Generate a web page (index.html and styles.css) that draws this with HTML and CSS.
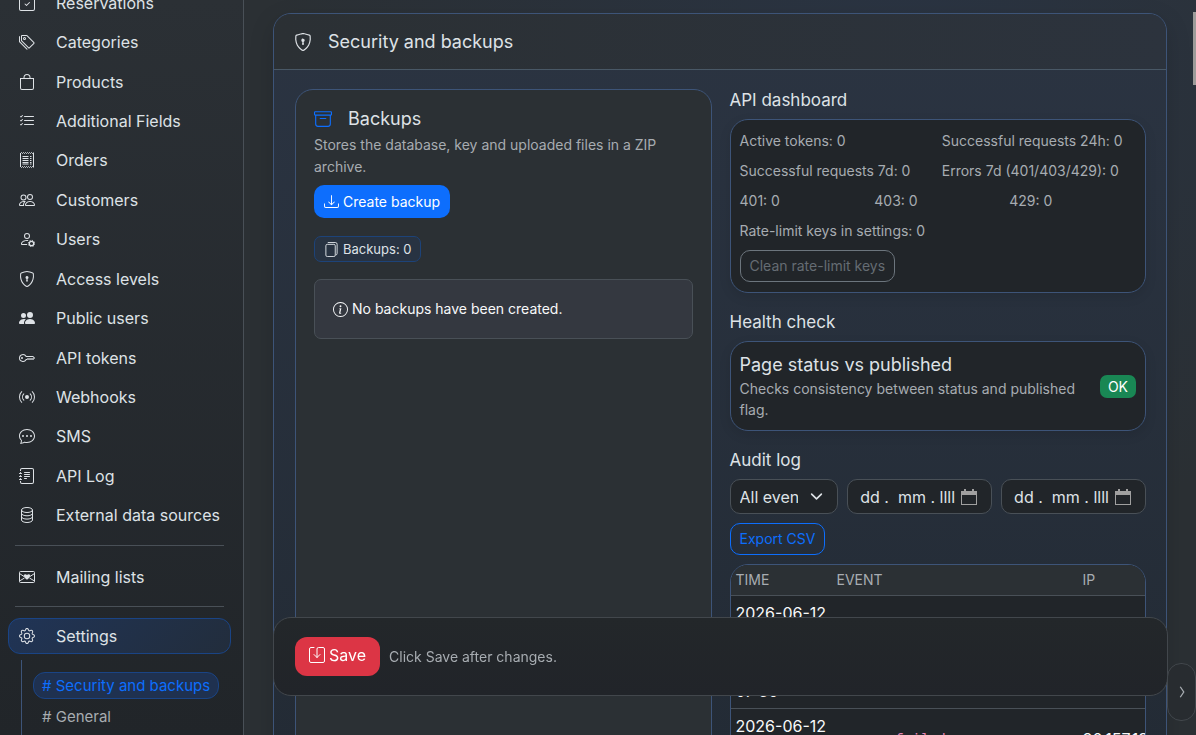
FILE: index.html
```html
<!DOCTYPE html>
<html lang="en">
<head>
  <meta charset="UTF-8">
  <meta name="viewport" content="width=device-width, initial-scale=1.0">
  <title>Security and backups</title>
  <link rel="stylesheet" href="styles.css">
</head>
<body>
  <svg class="sprite" aria-hidden="true">
    <symbol id="shield" viewBox="0 0 16 16">
      <path d="M5.338 1.59a61 61 0 0 0-2.837.856.48.48 0 0 0-.328.39c-.554 4.157.726 7.19 2.253 9.188a10.7 10.7 0 0 0 2.287 2.233c.346.244.652.42.893.533q.18.085.293.118a1 1 0 0 0 .101.025 1 1 0 0 0 .1-.025q.114-.034.294-.118c.24-.113.547-.29.893-.533a10.7 10.7 0 0 0 2.287-2.233c1.527-1.997 2.807-5.031 2.253-9.188a.48.48 0 0 0-.328-.39c-.651-.213-1.75-.56-2.837-.855C9.552 1.29 8.531 1.067 8 1.067c-.53 0-1.552.223-2.662.524zM5.072.56C6.157.265 7.31 0 8 0s1.843.265 2.928.56c1.11.3 2.229.655 2.887.87a1.54 1.54 0 0 1 1.044 1.262c.596 4.477-.787 7.795-2.465 9.99a11.8 11.8 0 0 1-2.517 2.453 7 7 0 0 1-1.048.625c-.28.132-.581.24-.829.24s-.548-.108-.829-.24a7 7 0 0 1-1.048-.625 11.8 11.8 0 0 1-2.517-2.453C1.928 10.487.545 7.169 1.141 2.692A1.54 1.54 0 0 1 2.185 1.43 63 63 0 0 1 5.072.56"/>
      <path d="M9.5 6.5a1.5 1.5 0 0 1-1 1.415l.385 1.99a.5.5 0 0 1-.491.595h-.788a.5.5 0 0 1-.49-.595l.384-1.99a1.5 1.5 0 1 1 2-1.415"/>
    </symbol>
    <symbol id="people" viewBox="0 0 16 16">
      <path d="M15 14s1 0 1-1-1-4-5-4-5 3-5 4 1 1 1 1zm-7.978-1L7 12.996c.001-.264.167-1.03.76-1.72C8.312 10.629 9.282 10 11 10c1.717 0 2.687.63 3.24 1.276.593.69.758 1.457.76 1.72l-.008.002-.014.002zM11 7a2 2 0 1 0 0-4 2 2 0 0 0 0 4m3-2a3 3 0 1 1-6 0 3 3 0 0 1 6 0M6.936 9.28a6 6 0 0 0-1.23-.247A7 7 0 0 0 5 9c-4 0-5 3-5 4q0 1 1 1h4.216A2.24 2.24 0 0 1 5 13c0-1.01.377-2.042 1.09-2.904.243-.294.526-.569.846-.816M4.92 10A5.5 5.5 0 0 0 4 13H1c0-.26.164-1.03.76-1.724.545-.636 1.492-1.256 3.16-1.275ZM1.5 5.5a3 3 0 1 1 6 0 3 3 0 0 1-6 0m3-2a2 2 0 1 0 0 4 2 2 0 0 0 0-4"/>
    </symbol>
  </svg>

  <div class="layout">
    <aside class="sidebar">
      <nav class="nav">
        <div class="nav-group">
          <a href="#" class="nav-item">
            <svg class="icon" viewBox="0 0 16 16"><path d="M10.854 7.146a.5.5 0 0 1 0 .708l-3 3a.5.5 0 0 1-.708 0l-1.5-1.5a.5.5 0 1 1 .708-.708L7.5 9.793l2.646-2.647a.5.5 0 0 1 .708 0"/><path d="M3.5 0a.5.5 0 0 1 .5.5V1h8V.5a.5.5 0 0 1 1 0V1h1a2 2 0 0 1 2 2v11a2 2 0 0 1-2 2H2a2 2 0 0 1-2-2V3a2 2 0 0 1 2-2h1V.5a.5.5 0 0 1 .5-.5M1 4v10a1 1 0 0 0 1 1h12a1 1 0 0 0 1-1V4z"/></svg>
            Reservations
          </a>
          <a href="#" class="nav-item">
            <svg class="icon" viewBox="0 0 16 16"><path d="M3 2v4.586l7 7L14.586 9l-7-7zM2 2a1 1 0 0 1 1-1h4.586a1 1 0 0 1 .707.293l7 7a1 1 0 0 1 0 1.414l-4.586 4.586a1 1 0 0 1-1.414 0l-7-7A1 1 0 0 1 2 6.586z"/><path d="M5.5 5a.5.5 0 1 1 0-1 .5.5 0 0 1 0 1m0 1a1.5 1.5 0 1 0 0-3 1.5 1.5 0 0 0 0 3M1 7.086a1 1 0 0 0 .293.707L8.75 15.25l-.043.043a1 1 0 0 1-1.414 0l-7-7A1 1 0 0 1 0 7.586V3a1 1 0 0 1 1-1z"/></svg>
            Categories
          </a>
          <a href="#" class="nav-item">
            <svg class="icon" viewBox="0 0 16 16"><path d="M8 1a2.500 2.500 0 0 1 2.500 2.500V4h-5v-.5A2.500 2.500 0 0 1 8 1m3.500 3v-.5a3.500 3.500 0 1 0-7 0V4H1v10a2 2 0 0 0 2 2h10a2 2 0 0 0 2-2V4zM2 5h12v9a1 1 0 0 1-1 1H3a1 1 0 0 1-1-1z"/></svg>
            Products
          </a>
          <a href="#" class="nav-item">
            <svg class="icon" viewBox="0 0 16 16"><path d="M5 11.500a.5.5 0 0 1 .5-.5h9a.5.5 0 0 1 0 1h-9a.5.5 0 0 1-.5-.5m0-4a.5.5 0 0 1 .5-.5h9a.5.5 0 0 1 0 1h-9a.5.5 0 0 1-.5-.5m0-4a.5.5 0 0 1 .5-.5h9a.5.5 0 0 1 0 1h-9a.5.5 0 0 1-.5-.5M3.854 2.146a.5.5 0 0 1 0 .708l-1.500 1.500a.5.5 0 0 1-.708 0l-.5-.5a.5.5 0 1 1 .708-.708L2 3.293l1.146-1.147a.5.5 0 0 1 .708 0m0 4a.5.5 0 0 1 0 .708l-1.500 1.500a.5.5 0 0 1-.708 0l-.5-.5a.5.5 0 1 1 .708-.708L2 7.293l1.146-1.147a.5.5 0 0 1 .708 0m0 4a.5.5 0 0 1 0 .708l-1.500 1.500a.5.5 0 0 1-.708 0l-.5-.5a.5.5 0 0 1 .708-.708l.146.147 1.146-1.147a.5.5 0 0 1 .708 0"/></svg>
            Additional Fields
          </a>
          <a href="#" class="nav-item">
            <svg class="icon" viewBox="0 0 16 16"><path d="M1.500 1v14M14.500 1v14M1.500 1.500l1-1 1 1 1-1 1 1 1-1 1 1 1-1 1 1 1-1 1 1 1-1 1 1 1-1M1.500 14.500l1 1 1-1 1 1 1-1 1 1 1-1 1 1 1-1 1 1 1-1 1 1 1-1 1 1M3.500 4.500h6M3.500 6.500h6M3.500 8.500h6M3.500 10.500h6M3.500 12h6M11 4.500h1.500M11 6.500h1.500M11 8.500h1.500M11 10.500h1.500M11 12h1.500" fill="none" stroke="currentColor"/></svg>
            Orders
          </a>
          <a href="#" class="nav-item"><svg class="icon"><use href="#people"/></svg>Customers</a>
          <a href="#" class="nav-item">
            <svg class="icon" viewBox="0 0 16 16"><path d="M11 5a3 3 0 1 1-6 0 3 3 0 0 1 6 0M8 7a2 2 0 1 0 0-4 2 2 0 0 0 0 4m.256 7a4.500 4.500 0 0 1-.229-1.004H3c.001-.246.154-.986.832-1.664C4.484 10.680 5.711 10 8 10q.390 0 .740.025c.226-.341.496-.650.804-.918Q8.844 9.002 8 9c-5 0-6 3-6 4s1 1 1 1z"/><circle cx="12.500" cy="12.500" r="2.200" fill="none" stroke="currentColor" stroke-width="1.300"/><circle cx="12.500" cy="12.500" r="3.200" fill="none" stroke="currentColor" stroke-dasharray="1.200 1.310"/></svg>
            Users
          </a>
          <a href="#" class="nav-item"><svg class="icon"><use href="#shield"/></svg>Access levels</a>
          <a href="#" class="nav-item">
            <svg class="icon" viewBox="0 0 16 16"><path d="M7 14s-1 0-1-1 1-4 5-4 5 3 5 4-1 1-1 1zm4-6a3 3 0 1 0 0-6 3 3 0 0 0 0 6m-5.784 6A2.240 2.240 0 0 1 5 13c0-1.355.680-2.750 1.936-3.720A6.300 6.300 0 0 0 5 9c-4 0-5 3-5 4s1 1 1 1zM4.500 8a2.500 2.500 0 1 0 0-5 2.500 2.500 0 0 0 0 5"/></svg>
            Public users
          </a>
          <a href="#" class="nav-item">
            <svg class="icon" viewBox="0 0 16 16"><path d="M0 8a4 4 0 0 1 7.465-2H14a.5.5 0 0 1 .354.146l1.500 1.500a.5.5 0 0 1 0 .708l-1.500 1.500a.5.5 0 0 1-.708 0L13 9.207l-.646.647a.5.5 0 0 1-.708 0L11 9.207l-.646.647a.5.5 0 0 1-.708 0L9 9.207l-.646.647A.5.5 0 0 1 8 10h-.535A4 4 0 0 1 0 8m4-3a3 3 0 1 0 2.712 4.285A.5.5 0 0 1 7.163 9h.630l.853-.854a.5.5 0 0 1 .708 0l.646.647.646-.647a.5.5 0 0 1 .708 0l.646.647.646-.647a.5.5 0 0 1 .708 0l.646.647.793-.793-1-1h-6.630a.5.5 0 0 1-.451-.285A3 3 0 0 0 4 5"/><path d="M4 8a1 1 0 1 1-2 0 1 1 0 0 1 2 0"/></svg>
            API tokens
          </a>
          <a href="#" class="nav-item">
            <svg class="icon" viewBox="0 0 16 16"><path d="M3.050 3.050a7 7 0 0 0 0 9.900.5.5 0 0 1-.707.707 8 8 0 0 1 0-11.314.5.5 0 0 1 .707.707m2.122 2.122a4 4 0 0 0 0 5.656.5.5 0 1 1-.708.708 5 5 0 0 1 0-7.072.5.5 0 0 1 .708.708m5.656-.708a.5.5 0 0 1 .708 0 5 5 0 0 1 0 7.072.5.5 0 1 1-.708-.708 4 4 0 0 0 0-5.656.5.5 0 0 1 0-.708m2.122-2.120a.5.5 0 0 1 .707 0 8 8 0 0 1 0 11.313.5.5 0 0 1-.707-.707 7 7 0 0 0 0-9.900.5.5 0 0 1 0-.707zM10 8a2 2 0 1 1-4 0 2 2 0 0 1 4 0"/></svg>
            Webhooks
          </a>
          <a href="#" class="nav-item">
            <svg class="icon" viewBox="0 0 16 16"><path d="M5 8a1 1 0 1 1-2 0 1 1 0 0 1 2 0m4 0a1 1 0 1 1-2 0 1 1 0 0 1 2 0m3 1a1 1 0 1 0 0-2 1 1 0 0 0 0 2"/><path d="m2.165 15.803.020-.004c1.830-.363 2.948-.842 3.468-1.105A9 9 0 0 0 8 15c4.418 0 8-3.134 8-7s-3.582-7-8-7-8 3.134-8 7c0 1.760.743 3.370 1.970 4.600a10.400 10.400 0 0 1-.524 2.318l-.003.011a11 11 0 0 1-.244.637c-.079.186.074.394.273.362a22 22 0 0 0 .693-.125m.800-3.108a1 1 0 0 0-.287-.801C1.618 10.830 1 9.468 1 8c0-3.192 3.004-6 7-6s7 2.808 7 6-3.004 6-7 6a8 8 0 0 1-2.088-.272 1 1 0 0 0-.711.074c-.387.196-1.240.570-2.634.893a11 11 0 0 0 .398-2"/></svg>
            SMS
          </a>
          <a href="#" class="nav-item">
            <svg class="icon" viewBox="0 0 16 16"><path d="M5 10.500a.5.5 0 0 1 .5-.5h2a.5.5 0 0 1 0 1h-2a.5.5 0 0 1-.5-.5m0-2a.5.5 0 0 1 .5-.5h5a.5.5 0 0 1 0 1h-5a.5.5 0 0 1-.5-.5m0-2a.5.5 0 0 1 .5-.5h5a.5.5 0 0 1 0 1h-5a.5.5 0 0 1-.5-.5m0-2a.5.5 0 0 1 .5-.5h5a.5.5 0 0 1 0 1h-5a.5.5 0 0 1-.5-.5"/><path d="M3 0h10a2 2 0 0 1 2 2v12a2 2 0 0 1-2 2H3a2 2 0 0 1-2-2v-1h1v1a1 1 0 0 0 1 1h10a1 1 0 0 0 1-1V2a1 1 0 0 0-1-1H3a1 1 0 0 0-1 1v1H1V2a2 2 0 0 1 2-2"/><path d="M1 5v-.5a.5.5 0 0 1 1 0V5h.5a.5.5 0 0 1 0 1h-2a.5.5 0 0 1 0-1zm0 3v-.5a.5.5 0 0 1 1 0V8h.5a.5.5 0 0 1 0 1h-2a.5.5 0 0 1 0-1zm0 3v-.5a.5.5 0 0 1 1 0v.5h.5a.5.5 0 0 1 0 1h-2a.5.5 0 0 1 0-1z"/></svg>
            API Log
          </a>
          <a href="#" class="nav-item">
            <svg class="icon" viewBox="0 0 16 16"><g fill="none" stroke="currentColor"><ellipse cx="8" cy="3" rx="5.500" ry="2.500"/><path d="M2.500 3v10c0 1.400 2.500 2.500 5.500 2.500s5.500-1.100 5.500-2.500V3M2.500 6.300c0 1.400 2.500 2.500 5.500 2.500s5.500-1.100 5.500-2.500M2.500 9.600c0 1.400 2.500 2.500 5.500 2.500s5.500-1.100 5.500-2.500"/></g></svg>
            External data sources
          </a>
        </div>
        <hr class="nav-divider">
        <a href="#" class="nav-item nav-single">
          <svg class="icon" viewBox="0 0 16 16"><path d="M1.500 2.500h13a1 1 0 0 1 1 1v9a1 1 0 0 1-1 1h-13a1 1 0 0 1-1-1v-9a1 1 0 0 1 1-1zM.5 4.500 5 7.500M15.500 4.500 11 7.500M.5 12l5-3M15.500 12l-5-3" fill="none" stroke="currentColor"/><path d="M8 6c1.500-1.500 4-.5 3 1.500C10.500 8.700 9.300 9.700 8 10.800 6.700 9.700 5.500 8.700 5 7.500 4 5.500 6.500 4.500 8 6"/></svg>
          Mailing lists
        </a>
        <hr class="nav-divider">
        <a href="#" class="nav-item nav-active">
          <svg class="icon" viewBox="0 0 16 16"><path d="M8 4.754a3.246 3.246 0 1 0 0 6.492 3.246 3.246 0 0 0 0-6.492M5.754 8a2.246 2.246 0 1 1 4.492 0 2.246 2.246 0 0 1-4.492 0"/><path d="M9.796 1.343c-.527-1.790-3.065-1.790-3.592 0l-.094.319a.873.873 0 0 1-1.255.520l-.292-.160c-1.640-.892-3.433.902-2.540 2.541l.159.292a.873.873 0 0 1-.520 1.255l-.319.094c-1.790.527-1.790 3.065 0 3.592l.319.094a.873.873 0 0 1 .520 1.255l-.160.292c-.892 1.640.901 3.434 2.541 2.540l.292-.159a.873.873 0 0 1 1.255.520l.094.319c.527 1.790 3.065 1.790 3.592 0l.094-.319a.873.873 0 0 1 1.255-.520l.292.160c1.640.893 3.434-.902 2.540-2.541l-.159-.292a.873.873 0 0 1 .520-1.255l.319-.094c1.790-.527 1.790-3.065 0-3.592l-.319-.094a.873.873 0 0 1-.520-1.255l.160-.292c.893-1.640-.902-3.433-2.541-2.540l-.292.159a.873.873 0 0 1-1.255-.520zm-2.633.283c.246-.835 1.428-.835 1.674 0l.094.319a1.873 1.873 0 0 0 2.693 1.115l.291-.160c.764-.415 1.600.420 1.184 1.185l-.159.292a1.873 1.873 0 0 0 1.116 2.692l.318.094c.835.246.835 1.428 0 1.674l-.319.094a1.873 1.873 0 0 0-1.115 2.693l.160.291c.415.764-.420 1.600-1.185 1.184l-.291-.159a1.873 1.873 0 0 0-2.693 1.116l-.094.318c-.246.835-1.428.835-1.674 0l-.094-.319a1.873 1.873 0 0 0-2.692-1.115l-.292.160c-.764.415-1.600-.420-1.184-1.185l.159-.291A1.873 1.873 0 0 0 1.945 8.930l-.319-.094c-.835-.246-.835-1.428 0-1.674l.319-.094A1.873 1.873 0 0 0 3.060 4.377l-.160-.292c-.415-.764.420-1.600 1.185-1.184l.292.159a1.873 1.873 0 0 0 2.692-1.115z"/></svg>
          Settings
        </a>
        <div class="subnav">
          <a href="#security" class="subnav-item subnav-active"># Security and backups</a>
          <a href="#general" class="subnav-item"># General</a>
        </div>
      </nav>
    </aside>

    <main class="content">
      <section class="card" id="security">
        <header class="card-header">
          <svg class="icon icon-lg"><use href="#shield"/></svg>
          <h1>Security and backups</h1>
        </header>
        <div class="card-body">
          <section class="backups">
            <div class="backups-title">
              <svg class="icon icon-lg" viewBox="0 0 16 16"><path d="M0 2a1 1 0 0 1 1-1h14a1 1 0 0 1 1 1v2a1 1 0 0 1-1 1v7.500a2.500 2.500 0 0 1-2.500 2.500h-9A2.500 2.500 0 0 1 1 12.500V5a1 1 0 0 1-1-1zm2 3v7.500A1.500 1.500 0 0 0 3.500 14h9a1.500 1.500 0 0 0 1.500-1.500V5zm13-3H1v2h14zM5 7.500a.5.5 0 0 1 .5-.5h5a.5.5 0 0 1 0 1h-5a.5.5 0 0 1-.5-.5"/></svg>
              <h2>Backups</h2>
            </div>
            <p class="muted">Stores the database, key and uploaded files in a ZIP archive.</p>
            <button type="button" class="btn btn-primary">
              <svg class="icon icon-sm" viewBox="0 0 16 16"><path d="M.5 9.900a.5.5 0 0 1 .5.5v2.500a1 1 0 0 0 1 1h12a1 1 0 0 0 1-1v-2.500a.5.5 0 0 1 1 0v2.500a2 2 0 0 1-2 2H2a2 2 0 0 1-2-2v-2.500a.5.5 0 0 1 .5-.5"/><path d="M7.646 11.854a.5.5 0 0 0 .708 0l3-3a.5.5 0 0 0-.708-.708L8.500 10.293V1.500a.5.5 0 0 0-1 0v8.793L5.354 8.146a.5.5 0 1 0-.708.708z"/></svg>
              Create backup
            </button>
            <div class="chip">
              <svg class="icon icon-sm" viewBox="0 0 16 16"><path d="M3.500 2.500h7a1.500 1.500 0 0 1 1.500 1.500v10a1.500 1.500 0 0 1-1.500 1.500h-7A1.500 1.500 0 0 1 2 14V4a1.500 1.500 0 0 1 1.500-1.500zM4 .5h8A2 2 0 0 1 14 2.500V12a2 2 0 0 1-1.500 2" fill="none" stroke="currentColor"/></svg>
              Backups: 0
            </div>
            <div class="alert">
              <svg class="icon icon-sm" viewBox="0 0 16 16"><path d="M8 15A7 7 0 1 1 8 1a7 7 0 0 1 0 14m0 1A8 8 0 1 0 8 0a8 8 0 0 0 0 16"/><path d="m8.930 6.588-2.290.287-.082.380.450.083c.294.070.352.176.288.469l-.738 3.468c-.194.897.105 1.319.808 1.319.545 0 1.178-.252 1.465-.598l.088-.416c-.200.176-.492.246-.686.246-.275 0-.375-.193-.304-.533zM9 4.500a1 1 0 1 1-2 0 1 1 0 0 1 2 0"/></svg>
              No backups have been created.
            </div>
          </section>

          <div class="side">
            <section>
              <h3>API dashboard</h3>
              <div class="panel api-panel">
                <div class="stats-two">
                  <span>Active tokens: 0</span>
                  <span>Successful requests 24h: 0</span>
                  <span>Successful requests 7d: 0</span>
                  <span>Errors 7d (401/403/429): 0</span>
                </div>
                <div class="stats-three">
                  <span>401: 0</span>
                  <span>403: 0</span>
                  <span>429: 0</span>
                </div>
                <span>Rate-limit keys in settings: 0</span>
                <button type="button" class="btn btn-outline" disabled>Clean rate-limit keys</button>
              </div>
            </section>

            <section>
              <h3>Health check</h3>
              <div class="panel health-panel">
                <div>
                  <h4>Page status vs published</h4>
                  <p class="muted">Checks consistency between status and published flag.</p>
                </div>
                <span class="badge">OK</span>
              </div>
            </section>

            <section>
              <h3>Audit log</h3>
              <form class="filters">
                <select class="field" aria-label="Event">
                  <option>All events</option>
                </select>
                <div class="field date-field">
                  <input type="text" aria-label="Date from" placeholder="dd .  mm . llll">
                  <svg class="calendar" viewBox="0 0 16 16"><path d="M3 0h2v2h6V0h2v2h3v14H0V2h3zM1 6v9h14V6z"/></svg>
                </div>
                <div class="field date-field">
                  <input type="text" aria-label="Date to" placeholder="dd .  mm . llll">
                  <svg class="calendar" viewBox="0 0 16 16"><path d="M3 0h2v2h6V0h2v2h3v14H0V2h3zM1 6v9h14V6z"/></svg>
                </div>
                <button type="button" class="btn btn-outline-primary">Export CSV</button>
              </form>
              <div class="table-wrap">
                <table class="log">
                  <thead>
                    <tr><th class="col-time">Time</th><th class="col-event">Event</th><th class="col-ip">IP</th></tr>
                  </thead>
                  <tbody>
                    <tr>
                      <td>2026-06-12<br>07:38<br>2026-06-12<br>07:36</td>
                      <td><code>access_failed</code></td>
                      <td>80.157.13</td>
                    </tr>
                    <tr>
                      <td>2026-06-12<br>07:36</td>
                      <td><code>access_failed</code></td>
                      <td>80.157.13</td>
                    </tr>
                  </tbody>
                </table>
              </div>
            </section>
          </div>
        </div>
      </section>
    </main>
  </div>

  <div class="save-bar">
    <button type="button" class="btn btn-save">
      <svg class="icon" viewBox="0 0 16 16"><path d="M5 .5H2A1.500 1.500 0 0 0 .5 2v12A1.500 1.500 0 0 0 2 15.500h12a1.500 1.500 0 0 0 1.500-1.500V2A1.500 1.500 0 0 0 14 .5H9.500a1.500 1.500 0 0 0-1.500 1.500v8.500M5 7.500l3 3 3-3" fill="none" stroke="currentColor" stroke-linecap="round" stroke-linejoin="round"/></svg>
      Save
    </button>
    <span class="muted">Click Save after changes.</span>
  </div>

  <button type="button" class="drawer-toggle" aria-label="Open panel">
    <svg viewBox="0 0 16 16"><path d="M6 2l4 6-4 6" fill="none" stroke="currentColor" stroke-width="1.500"/></svg>
  </button>
  <div class="scroll-thumb"></div>
</body>
</html>
```
FILE: styles.css
```css
* {
  box-sizing: border-box;
}

body {
  margin: 0;
  height: 100vh;
  overflow: hidden;
  font-family: Inter, "Noto Sans", sans-serif;
  font-size: 16px;
  line-height: 26px;
  color: #dee2e6;
  background: radial-gradient(ellipse at 75% 8%, #2a3443 0%, #2b3034 50%, #2b3034 100%);
}

h1, h2, h3, h4, p {
  margin: 0;
  font-weight: 400;
}

a {
  color: inherit;
  text-decoration: none;
}

button, input, select {
  font: inherit;
  color: inherit;
}

.sprite {
  display: none;
}

.icon {
  width: 16px;
  height: 16px;
  flex: none;
  fill: currentColor;
}

.icon-lg {
  width: 18px;
  height: 18px;
}

.icon-sm {
  width: 15px;
  height: 15px;
}

.muted {
  color: #a7acb1;
  font-size: 14px;
  line-height: 22px;
}

.layout {
  display: flex;
  height: 100%;
}

/* sidebar */
.sidebar {
  flex: none;
  width: 244px;
  overflow: hidden;
  border-right: 1px solid #495057;
  background: linear-gradient(180deg, #2b3035, #212529);
}

.nav {
  margin-top: -17px;
  padding: 0 12px 0 8px;
}

.nav-group {
  display: flex;
  flex-direction: column;
  height: 552px;
}

.nav-group .nav-item {
  flex: 1;
}

.nav-item {
  display: flex;
  align-items: center;
  gap: 21px;
  padding: 0 11px;
}

.nav-single {
  height: 39px;
}

.nav-divider {
  margin: 10px 7px 11px;
  border: 0;
  border-top: 1px solid #495057;
}

.nav-active {
  height: 36px;
  border: 1px solid #1a4485;
  border-radius: 12px;
  padding: 0 10px;
  background: linear-gradient(135deg, #203456, #222d3c);
}

.subnav {
  display: flex;
  flex-direction: column;
  align-items: flex-start;
  gap: 4px;
  margin: 6px 0 0 13px;
  padding: 12px 0 40px 11px;
  border-left: 1px solid #3d5478;
  font-size: 15px;
}

.subnav-item {
  padding: 0 8px;
  border: 1px solid transparent;
  color: #a7acb1;
  line-height: 25px;
}

.subnav-active {
  color: #0d6efd;
  border-color: #1a4485;
  border-radius: 12px;
  background: #1f3150;
}

/* main card */
.content {
  flex: 1;
  min-width: 0;
  padding: 13px 29px 0;
}

.card {
  border: 1px solid #3d5478;
  border-radius: 18px;
  background: linear-gradient(180deg, #2b3442, #232b35 735px);
  box-shadow: 0 8px 24px rgba(0, 0, 0, 0.15);
}

.card-header {
  display: flex;
  align-items: center;
  gap: 16px;
  height: 56px;
  padding: 0 20px;
  border-bottom: 1px solid #495866;
  border-radius: 17px 17px 0 0;
  background: linear-gradient(90deg, #2b3034, #2c333d);
}

.card-header h1,
.backups-title h2,
.health-panel h4 {
  font-size: 18px;
}

.card-body {
  display: grid;
  grid-template-columns: 1fr 1fr;
  gap: 18px;
  padding: 19px 20px 19px 21px;
}

.backups {
  padding: 14px 18px;
  border: 1px solid #3d5478;
  border-radius: 18px;
  background: #2b3034;
}

.backups-title {
  display: flex;
  align-items: center;
  gap: 16px;
  height: 30px;
}

.backups-title .icon {
  color: #0d6efd;
}

.btn {
  display: inline-flex;
  align-items: center;
  gap: 4px;
  padding: 0 9px;
  border: 1px solid transparent;
  border-radius: 10px;
  font-size: 14px;
  cursor: pointer;
}

.btn-primary {
  height: 33px;
  margin-top: 7px;
  color: #fff;
  background: #0d6efd;
}

.chip {
  display: flex;
  align-items: center;
  gap: 4px;
  width: fit-content;
  height: 26px;
  margin: 18px 0 17px;
  padding: 0 9px;
  border: 1px solid #1d4379;
  border-radius: 7px;
  background: #283342;
  font-size: 13px;
}

.alert {
  display: flex;
  align-items: center;
  gap: 4px;
  height: 60px;
  padding: 0 18px;
  border: 1px solid #495057;
  border-radius: 7px;
  background: #343840;
  color: #f8f9fa;
  font-size: 14px;
}

/* right column */
.side {
  display: flex;
  flex-direction: column;
  gap: 19px;
  min-width: 0;
  padding-top: 1px;
}

.side h3 {
  margin-bottom: 8px;
  font-size: 17px;
  line-height: 21px;
}

.panel {
  padding: 10px 9px;
  border: 1px solid #3d5478;
  border-radius: 18px;
  background: #212529;
  box-shadow: 0 4px 12px rgba(0, 0, 0, 0.1);
}

.api-panel {
  display: flex;
  flex-direction: column;
  align-items: flex-start;
  gap: 8px;
  color: #a7acb1;
  font-size: 14px;
  line-height: 22px;
}

.stats-two,
.stats-three {
  display: grid;
  gap: 8px;
  width: 100%;
}

.stats-two {
  grid-template-columns: 1fr 1fr;
  white-space: nowrap;
}

.stats-three {
  grid-template-columns: repeat(3, 1fr);
}

.btn-outline {
  height: 32px;
  border-color: #6c757d;
  background: transparent;
  color: #656c73;
}

.health-panel {
  display: flex;
  align-items: center;
  justify-content: space-between;
  gap: 12px;
}

.health-panel .muted {
  line-height: 21px;
}

.badge {
  padding: 0 8px;
  border-radius: 7px;
  background: #198754;
  color: #fff;
  font-size: 14px;
  line-height: 23px;
}

.filters {
  display: grid;
  grid-template-columns: 3fr 4fr 4fr;
  gap: 9px;
  margin-bottom: 9px;
}

.field {
  width: 100%;
  min-width: 0;
  height: 35px;
  padding: 0 9px;
  border: 1px solid #495057;
  border-radius: 10px;
  background-color: #212529;
}

select.field {
  appearance: none;
  padding-right: 39px;
  background-image: url("data:image/svg+xml,%3Csvg xmlns='http://www.w3.org/2000/svg' viewBox='0 0 16 16'%3E%3Cpath fill='none' stroke='%23dee2e6' stroke-linecap='round' stroke-linejoin='round' stroke-width='2' d='m2 5 6 6 6-6'/%3E%3C/svg%3E");
  background-repeat: no-repeat;
  background-position: right 14px center;
  background-size: 13px;
}

.date-field {
  display: flex;
  align-items: center;
  padding: 0 14px 0 12px;
}

.date-field input {
  flex: 1;
  min-width: 0;
  padding: 0;
  border: 0;
  background: transparent;
  outline: none;
  white-space: pre;
}

.date-field input::placeholder {
  color: #dee2e6;
  opacity: 1;
}

.calendar {
  flex: none;
  width: 16px;
  height: 16px;
  fill: #a0a0a0;
}

.btn-outline-primary {
  justify-self: start;
  height: 32px;
  border-color: #0d6efd;
  background: transparent;
  color: #0d6efd;
}

.table-wrap {
  overflow: hidden;
  border: 1px solid #3d5478;
  border-radius: 18px;
  background: #212529;
}

.log {
  width: 448px;
  table-layout: fixed;
  border-collapse: collapse;
  color: #f8f9fa;
}

.log th,
.log td {
  padding: 4px 5px;
  border-bottom: 1px solid #495057;
  text-align: left;
}

.log th {
  padding: 2px 5px;
  background: #2b3034;
  color: #a7acb1;
  font-size: 14px;
  font-weight: 400;
  text-transform: uppercase;
}

.log .col-time {
  width: 101px;
}

.log .col-event {
  width: 246px;
}

.log code {
  color: #e685b5;
  font-family: "Liberation Mono", monospace;
  font-size: 14px;
}

/* overlays */
.save-bar {
  position: fixed;
  right: 28px;
  bottom: 39px;
  left: 273px;
  display: flex;
  align-items: center;
  gap: 9px;
  height: 79px;
  padding: 0 21px;
  border: 1px solid #42474c;
  border-radius: 18px;
  background: linear-gradient(180deg, #23272a, #212429);
}

.btn-save {
  height: 39px;
  padding: 0 13px 3px;
  border-radius: 12px;
  background: #dc3545;
  color: #fff;
  font-size: 16px;
}

.drawer-toggle {
  position: fixed;
  right: 0;
  bottom: 14px;
  display: flex;
  align-items: center;
  justify-content: center;
  width: 29px;
  height: 58px;
  padding: 0;
  border: 1px solid #42474c;
  border-radius: 14px;
  background: #282c30;
  color: #a7acb1;
}

.drawer-toggle svg {
  width: 14px;
  height: 14px;
}

.scroll-thumb {
  position: fixed;
  top: 12px;
  right: 0;
  width: 3px;
  height: 73px;
  background: #9d9c9a;
}
```
